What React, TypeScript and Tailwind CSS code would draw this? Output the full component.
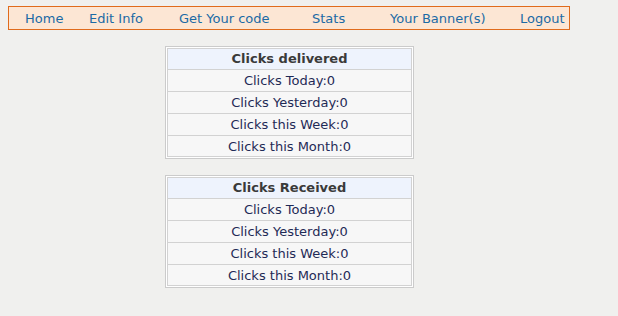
const links = [
  { label: "Home", w: "w-[64px]" },
  { label: "Edit Info", w: "w-[90px]" },
  { label: "Get Your code", w: "w-[133px]" },
  { label: "Stats", w: "w-[78px]" },
  { label: "Your Banner(s)", w: "w-[130px]" },
  { label: "Logout", w: "w-[48px]" },
];

const rows = ["Clicks Today:0", "Clicks Yesterday:0", "Clicks this Week:0", "Clicks this Month:0"];

function StatTable({ title }: { title: string }) {
  return (
    <div className="w-[249px] border border-[#cbcbcb] bg-white p-px">
      <div className="border border-[#d2d2d2]">
        <div className="h-[20px] bg-[#eef3fd] text-center font-bold leading-[20px] text-[#3a3a3a]">{title}</div>
        {rows.map((r) => (
          <div
            key={r}
            className="h-[22px] border-t border-[#d2d2d2] bg-[#f7f7f7] text-center leading-[21px] text-[#1f2a56] last:h-[21px]"
          >
            {r}
          </div>
        ))}
      </div>
    </div>
  );
}

export default function App() {
  return (
    <div className="h-[316px] w-[618px] bg-[#f0f0ee] pt-[6px] pl-[8px] text-[13px] font-['DejaVu_Sans',Verdana,sans-serif]">
      {/* top nav */}
      <div className="flex h-[24px] w-[562px] items-center border border-[#e06b1c] bg-[#fce6d4] pl-[16px] pt-px">
        {links.map((l) => (
          <a key={l.label} href="#" className={`${l.w} shrink-0 whitespace-nowrap text-[#1b6aa5]`}>
            {l.label}
          </a>
        ))}
      </div>

      <div className="ml-[157px] mt-[16px] flex flex-col gap-[16px]">
        <StatTable title="Clicks delivered" />
        <StatTable title="Clicks Received" />
      </div>
    </div>
  );
}
